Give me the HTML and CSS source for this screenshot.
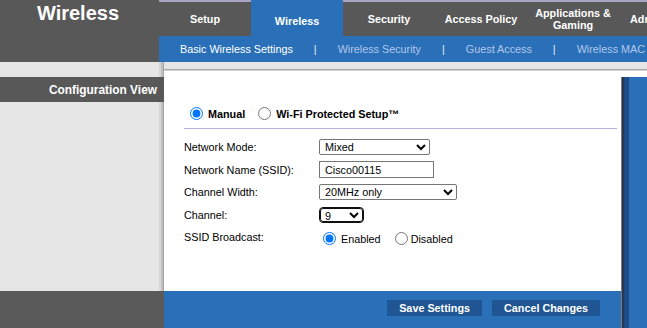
FILE: index.html
```html
<!DOCTYPE html>
<html lang="en">
<head>
<meta charset="utf-8">
<title>Wireless</title>
<link rel="stylesheet" href="styles.css">
</head>
<body>
<div class="page">
  <header class="top">
    <div class="brand">Wireless</div>
    <nav class="nav">
      <ul class="tabs">
        <li class="tab">Setup</li>
        <li class="tab tab-active">Wireless</li>
        <li class="tab">Security</li>
        <li class="tab">Access Policy</li>
        <li class="tab">Applications &amp;<br>Gaming</li>
        <li class="tab tab-last">Administration</li>
      </ul>
      <ul class="subnav">
        <li class="subnav-current">Basic Wireless Settings</li>
        <li class="subnav-sep">|</li>
        <li>Wireless Security</li>
        <li class="subnav-sep">|</li>
        <li>Guest Access</li>
        <li class="subnav-sep">|</li>
        <li>Wireless MAC Filter</li>
      </ul>
    </nav>
  </header>
  <div class="main">
    <aside class="side">
      <div class="side-top"></div>
      <div class="side-title">Configuration View</div>
      <div class="side-fill"></div>
      <div class="side-foot"></div>
    </aside>
    <section class="center">
      <div class="band"></div>
      <form class="panel">
        <div class="mode-row">
          <label class="mode-opt"><input type="radio" name="mode" checked>Manual</label>
          <label class="mode-opt"><input type="radio" name="mode">Wi-Fi Protected Setup™</label>
        </div>
        <hr class="rule">
        <div class="fields">
          <span class="lbl">Network Mode:</span>
          <select class="sel sel-mode"><option>Mixed</option></select>
          <span class="lbl">Network Name (SSID):</span>
          <input class="txt" type="text" value="Cisco00115">
          <span class="lbl">Channel Width:</span>
          <select class="sel sel-width"><option>20MHz only</option></select>
          <span class="lbl">Channel:</span>
          <select class="sel sel-channel"><option>9</option></select>
          <span class="lbl">SSID Broadcast:</span>
          <div class="radios">
            <label class="r-opt"><input type="radio" name="bc" checked>Enabled</label>
            <label class="r-opt r-opt-off"><input type="radio" name="bc">Disabled</label>
          </div>
        </div>
      </form>
      <footer class="foot">
        <button class="btn" type="button">Save Settings</button>
        <button class="btn" type="button">Cancel Changes</button>
      </footer>
    </section>
    <div class="rail">
      <div class="band"></div>
      <div class="rail-gap"></div>
      <div class="rail-bar"></div>
    </div>
  </div>
</div>
</body>
</html>
```
FILE: styles.css
```css
html, body {
  margin: 0;
  padding: 0;
}
body {
  font-family: "Liberation Sans", Arial, sans-serif;
  font-size: 10.8px;
  color: #000;
  overflow: hidden;
  background: #fff;
}
.page {
  width: 647px;
  height: 328px;
  overflow: hidden;
}

/* header */
.top {
  display: flex;
  height: 62px;
}
.brand {
  width: 159px;
  flex: none;
  box-sizing: border-box;
  background: #585858;
  color: #fff;
  font-weight: bold;
  font-size: 20px;
  text-align: center;
  padding: 2px 3px 0 0;
}
.nav {
  flex: 1;
  min-width: 0;
  display: flex;
  flex-direction: column;
}
.tabs {
  display: flex;
  height: 36px;
  margin: 0;
  padding: 0;
  list-style: none;
  overflow: hidden;
  background: linear-gradient(#a5a5c1 0 2px, #585858 2px);
}
.tab {
  flex: 0 0 92px;
  box-sizing: border-box;
  display: flex;
  align-items: center;
  justify-content: center;
  text-align: center;
  padding-top: 2px;
  color: #fff;
  font-weight: bold;
  line-height: 12px;
}
.tab-active {
  background: #2a70b8;
  padding-top: 6px;
}
.tab-last {
  flex: 0 0 auto;
  justify-content: flex-start;
  padding-left: 11px;
  white-space: nowrap;
}
.subnav {
  height: 26px;
  margin: 0;
  padding: 0 0 0 21px;
  list-style: none;
  display: flex;
  align-items: center;
  gap: 21px;
  white-space: nowrap;
  overflow: hidden;
  background: #2a70b8;
  color: #b2c6ec;
}
.subnav-current {
  color: #fff;
}
.subnav-sep {
  color: #e6edf8;
}

/* main */
.main {
  display: flex;
  height: 266px;
}
.side {
  width: 164px;
  flex: none;
  display: flex;
  flex-direction: column;
  background: linear-gradient(90deg, #e6e6e6 0 159px, #d6d6d6 159px 161px, #c0c0c0 161px 163px, #a4a4a4 163px);
}
.side-top {
  height: 15px;
}
.side-title {
  height: 25px;
  box-sizing: border-box;
  background: #585858;
  color: #fff;
  font-weight: bold;
  font-size: 11.9px;
  display: flex;
  align-items: center;
  justify-content: flex-end;
  padding: 1px 7px 0 0;
}
.side-fill {
  flex: 1;
}
.side-foot {
  height: 37px;
  background: #5a5a5a;
}

.center {
  flex: 1;
  min-width: 0;
  display: flex;
  flex-direction: column;
}
.band {
  height: 9px;
  flex: none;
  background: linear-gradient(#e6e6e6 0 7px, #a9a9a9 7px 8px, #d3d3d3 8px);
}
.panel {
  flex: 1;
  margin: 0;
  background: #fff;
  padding: 31px 4px 0 20px;
}
.mode-row {
  height: 23px;
  display: flex;
  align-items: center;
  padding-left: 6px;
  font-weight: bold;
}
.mode-opt {
  display: flex;
  align-items: center;
  gap: 5px;
  margin-right: 13px;
}
input[type="radio"] {
  width: 13px;
  height: 13px;
  margin: 0;
}
.rule {
  border: 0;
  border-top: 1px solid #b3b3e0;
  height: 0;
  margin: 3px 0 0;
}
.fields {
  display: grid;
  grid-template-columns: 135px auto;
  grid-auto-rows: 22.5px;
  align-items: center;
  justify-items: start;
  margin-top: 7px;
}
.sel {
  box-sizing: border-box;
  height: 16px;
  font: 10.8px "Liberation Sans", Arial, sans-serif;
  color: #000;
  background: #fff;
  border: 1px solid #767676;
  border-radius: 2px;
  padding: 0 0 0 1px;
}
.sel-mode {
  width: 111px;
}
.sel-width {
  width: 138px;
}
.sel-channel {
  width: 43px;
  height: 14px;
  margin-left: 1px;
  padding: 0;
  border: 1px solid #101010;
  outline: 1px solid #101010;
  border-radius: 3px;
}
.txt {
  box-sizing: border-box;
  width: 115px;
  height: 17px;
  padding: 0 5px;
  border: 1px solid #767676;
  font: 10.8px "Liberation Sans", Arial, sans-serif;
  color: #000;
}
.radios {
  display: flex;
  align-items: center;
  padding: 3px 0 0 4px;
}
.r-opt {
  display: flex;
  align-items: center;
  gap: 5px;
}
.r-opt-off {
  margin-left: 14px;
  gap: 3px;
}

.foot {
  height: 37px;
  flex: none;
  box-sizing: border-box;
  display: flex;
  justify-content: flex-end;
  align-items: flex-start;
  gap: 10px;
  padding: 9px 21px 0 0;
  background: #2a70b8;
}
.btn {
  height: 16px;
  padding: 0 12px;
  border: 0;
  background: #1f5593;
  color: #fff;
  font: bold 10.8px "Liberation Sans", Arial, sans-serif;
}

.rail {
  width: 26px;
  flex: none;
  display: flex;
  flex-direction: column;
}
.rail-gap {
  height: 6px;
  background: #fff;
}
.rail-bar {
  flex: 1;
  background: linear-gradient(90deg, #7a7a84 0 1px, #2b3550 1px 3px, #1f4c84 3px 8px, #2a70b8 8px);
}
```
